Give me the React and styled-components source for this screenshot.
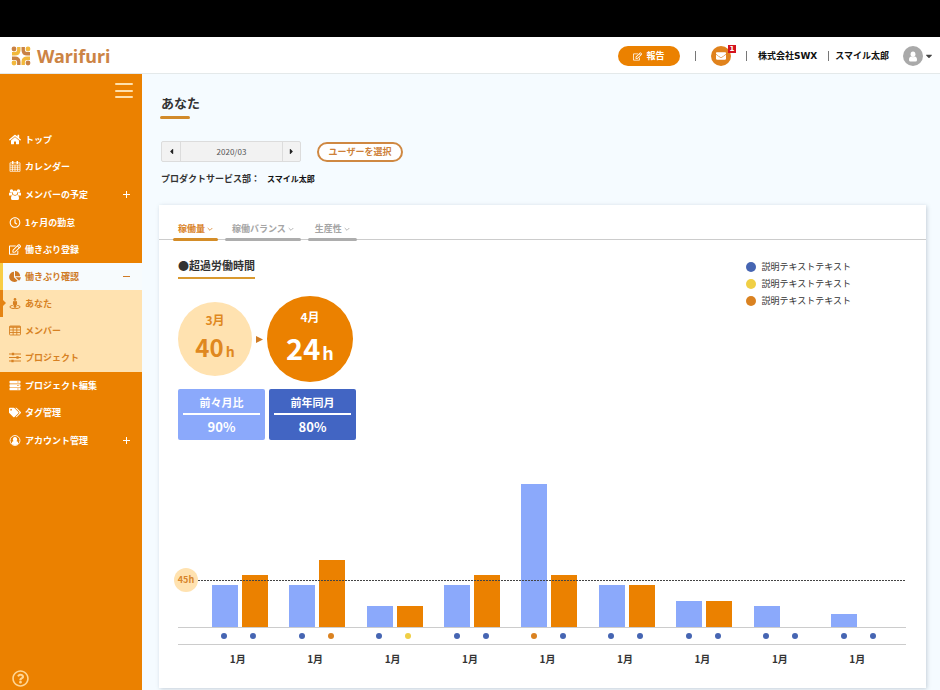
import React from "react";
import styled, { createGlobalStyle } from "styled-components";
import {
  FaCaretDown,
  FaCaretLeft,
  FaCaretRight,
  FaChartPie,
  FaEnvelope,
  FaHome,
  FaRegClock,
  FaRegEdit,
  FaRegQuestionCircle,
  FaServer,
  FaStreetView,
  FaTags,
} from "react-icons/fa";

const GlobalStyle = createGlobalStyle`
  * {
    box-sizing: border-box;
  }

  body {
    margin: 0;
    background: #f5fbff;
    color: #333;
    font-family: "Noto Sans CJK JP", sans-serif;
    font-weight: 700;
    font-size: 9px;
    line-height: 12px;
  }

  h1, h2, p, ul, dl, dd {
    margin: 0;
    padding: 0;
  }

  ul {
    list-style: none;
  }

  a {
    color: inherit;
    text-decoration: none;
  }

  button {
    font: inherit;
    padding: 0;
    cursor: pointer;
  }

  svg {
    display: block;
    flex: none;
  }
`;

const Page = styled.div`
  min-height: 100vh;
  display: flex;
  flex-direction: column;
`;

const TopBand = styled.div`
  height: 37px;
  background: #000;
`;

const Header = styled.header`
  height: 37px;
  padding: 2px 6px 0 11px;
  display: flex;
  align-items: center;
  justify-content: space-between;
  background: #fff;
  border-bottom: 1px solid #e4e9ea;
`;

const Brand = styled.a`
  display: flex;
  align-items: center;
  gap: 6px;
  color: #cc8445;
  font-family: "Noto Sans", sans-serif;
  font-size: 18px;
  line-height: 24px;
`;

const HeaderMenu = styled.div`
  display: flex;
  align-items: center;
  color: #111;
  font-family: "DejaVu Sans", "Noto Sans CJK JP", sans-serif;
`;

const ReportButton = styled.button`
  width: 62px;
  height: 20px;
  display: flex;
  align-items: center;
  justify-content: center;
  gap: 4px;
  color: #fff;
  background: #eb8100;
  border: none;
  border-radius: 10px;
`;

const Separator = styled.span`
  width: 1px;
  height: 10px;
  margin: 0 ${(props) => props.$right}px 0 ${(props) => props.$left}px;
  background: #777;
`;

const MailButton = styled.button`
  position: relative;
  width: 20px;
  height: 20px;
  display: grid;
  place-items: center;
  color: #fff;
  background: #e0821c;
  border: none;
  border-radius: 50%;
`;

const Badge = styled.span`
  position: absolute;
  top: -1px;
  right: -5px;
  width: 8px;
  height: 8px;
  background: #d3121f;
  font-size: 7px;
  line-height: 8px;
`;

const AccountButton = styled.button`
  display: flex;
  align-items: center;
  gap: 1px;
  margin-left: 14px;
  color: #444;
  background: none;
  border: none;
`;

const Avatar = styled.span`
  width: 20px;
  height: 20px;
  display: grid;
  place-items: center;
  color: #fff;
  background: #a9a9a9;
  border-radius: 50%;
`;

const Body = styled.div`
  flex: 1;
  display: flex;
`;

const Sidebar = styled.nav`
  flex: none;
  width: 142px;
  padding-bottom: 3px;
  display: flex;
  flex-direction: column;
  color: #fff;
  background: #eb8100;
`;

const MenuToggle = styled.button`
  align-self: flex-end;
  width: 18px;
  height: 15px;
  margin: 9px 9px 28px 0;
  display: flex;
  flex-direction: column;
  justify-content: space-between;
  background: none;
  border: none;

  span {
    width: 100%;
    height: 2px;
    border-radius: 1px;
    background: #ffe0ab;
  }
`;

const NavLink = styled.a`
  position: relative;
  height: ${(props) => (props.$tall ? 29 : 27)}px;
  padding: 0 10px 0 9px;
  display: flex;
  align-items: center;
  gap: 4px;
  color: ${(props) => (props.$active ? "#cf7a26" : "inherit")};
  background: ${(props) => (props.$active ? "#f7fbfd" : "none")};
  box-shadow: ${(props) => (props.$active ? "inset 3px 0 #f8cd45" : "none")};

  > svg:first-child {
    width: 12px;
    height: 11px;
  }
`;

const NavSign = styled.svg`
  margin-left: auto;
`;

const SubMenu = styled.ul`
  padding-bottom: 1px;
  color: #d78122;
  background: #ffe2b0;
`;

const Marker = styled.span`
  position: absolute;
  left: 0;
  top: 0;
  width: 3px;
  height: 100%;
  background: #e58312;

  &::after {
    content: "";
    position: absolute;
    left: 3px;
    top: 10px;
    border: 3px solid transparent;
    border-left-color: #e58312;
    border-right: none;
  }
`;

const HelpButton = styled.button`
  width: 17px;
  height: 17px;
  margin: auto 0 0 12px;
  color: #ffd694;
  background: none;
  border: none;
`;

const Main = styled.main`
  flex: 1;
  min-width: 0;
  padding: 20px 14px 2px 17px;
`;

const PageTitle = styled.h1`
  padding-left: 2px;
  font-size: 13px;
  line-height: 18px;

  &::after {
    content: "";
    display: block;
    width: 30px;
    height: 3px;
    margin: 4px 0 0 -1px;
    border-radius: 2px;
    background: #d18a2b;
  }
`;

const Toolbar = styled.div`
  margin: 22px 0 11px 2px;
  display: flex;
  align-items: center;
  gap: 16px;
`;

const MonthPicker = styled.div`
  width: 140px;
  height: 21px;
  display: grid;
  grid-template-columns: 19px 1fr 18px;
  color: #555;
  background: #f2f2f2;
  border: 1px solid #dcdcdc;
  border-radius: 2px;
  font-size: 8px;
  font-weight: 400;
  line-height: 19px;
  text-align: center;
`;

const MonthStep = styled.button`
  display: grid;
  place-items: center;
  color: #222;
  background: none;
  border: 0 solid #dcdcdc;
  border-width: ${(props) => (props.$next ? "0 0 0 1px" : "0 1px 0 0")};
`;

const SelectUser = styled.button`
  width: 86px;
  height: 20px;
  color: #cd8038;
  background: #fff;
  border: 2px solid #cf8842;
  border-radius: 10px;
`;

const Department = styled.p`
  padding-left: 2px;

  span {
    margin-left: 5px;
    color: #111;
    font-size: 8px;
  }
`;

const Card = styled.section`
  margin-top: 20px;
  padding-top: 18px;
  background: #fff;
  box-shadow: 1px 1px 4px rgba(90, 110, 130, 0.3);
`;

const Tabs = styled.div`
  padding-left: 14px;
  display: flex;
  gap: 7px;
  border-bottom: 1px solid #ccc;
`;

const Tab = styled.button`
  position: relative;
  margin-bottom: -2px;
  padding: 0 ${(props) => (props.$active ? 5 : 7)}px 6px;
  display: flex;
  align-items: center;
  gap: 2px;
  color: ${(props) => (props.$active ? "#d9832a" : "#a5a5a5")};
  background: none;
  border: none;

  /* rounded bar lying on the rule */
  &::after {
    content: "";
    position: absolute;
    left: 0;
    right: 0;
    bottom: 0;
    height: 3px;
    border-radius: 2px;
    background: ${(props) => (props.$active ? "#d48d28" : "#adadad")};
  }
`;

const CardBody = styled.div`
  padding: 18px 20px 21px 19px;
`;

const Overview = styled.div`
  display: flex;
  justify-content: space-between;
  align-items: flex-start;
`;

const SectionTitle = styled.h2`
  width: max-content;
  padding-bottom: 5px;
  border-bottom: 2px solid #d9992f;
  font-size: 11px;
  line-height: 14px;
`;

const Comparison = styled.div`
  margin: 17px 0 7px;
  display: flex;
  align-items: center;
  gap: 4px;
`;

const MonthCircle = styled.div`
  width: ${(props) => (props.$current ? 86 : 74)}px;
  height: ${(props) => (props.$current ? 86 : 74)}px;
  padding-bottom: 2px;
  display: flex;
  flex-direction: column;
  align-items: center;
  justify-content: center;
  color: ${(props) => (props.$current ? "#fff" : "#df8820")};
  background: ${(props) => (props.$current ? "#eb8100" : "#ffe2b0")};
  border-radius: 50%;
  font-size: 12px;
  line-height: 18px;
`;

const Hours = styled.span`
  display: flex;
  align-items: baseline;
  gap: 2px;
  font-size: ${(props) => (props.$current ? 29 : 24)}px;
  line-height: ${(props) => (props.$current ? 42 : 36)}px;

  small {
    font-size: ${(props) => (props.$current ? 18 : 14)}px;
    line-height: 18px;
  }
`;

const Ratios = styled.dl`
  display: flex;
  gap: 4px;
`;

const Ratio = styled.div`
  width: 87px;
  height: 51px;
  padding: 4px 5px;
  color: #fff;
  background: ${(props) => props.$color};
  border-radius: 2px;
  text-align: center;

  dt {
    padding-bottom: 2px;
    border-bottom: 2px solid #fff;
    font-size: 11px;
    line-height: 18px;
  }

  dd {
    font-size: 13px;
    line-height: 24px;
  }
`;

const Legend = styled.ul`
  margin: 3px 55px 0 0;
  display: grid;
  gap: 5px;
  font-weight: 400;

  li {
    display: flex;
    align-items: center;
    gap: 6px;
  }
`;

const Dot = styled.span`
  width: ${(props) => props.$size}px;
  height: ${(props) => props.$size}px;
  border-radius: 50%;
  background: ${(props) => props.$color};
`;

const Chart = styled.div`
  margin-top: 43px;
`;

const Plot = styled.div`
  position: relative;
  border-bottom: 1px solid #ccc;
`;

const Months = styled.div`
  padding: 0 8px 0 23px;
  display: grid;
  grid-template-columns: repeat(9, 1fr);
`;

const BarPair = styled.div`
  height: 144px;
  display: flex;
  justify-content: center;
  align-items: flex-end;
  gap: 4px;
`;

const Bar = styled.div`
  width: 26px;
  background: ${(props) => props.$color};
`;

const Threshold = styled.div`
  position: absolute;
  left: -4px;
  right: 0;
  bottom: 35px;
  display: flex;
  align-items: center;

  span {
    width: 24px;
    color: #d8862b;
    background: #ffe2b0;
    border-radius: 50%;
    line-height: 24px;
    text-align: center;
  }

  &::after {
    content: "";
    flex: 1;
    height: 1px;
    background: repeating-linear-gradient(90deg, #444 0 2px, transparent 2px 3px);
  }
`;

const DotRow = styled.div`
  padding: 5px 0;
  border-bottom: 1px solid #ccc;
`;

const DotPair = styled.div`
  height: 6px;
  padding-right: 2px;
  display: flex;
  justify-content: center;
  gap: 23px;
`;

const MonthLabel = styled.span`
  padding: 6px 4px 0 0;
  font-size: 10px;
  line-height: 16px;
  text-align: center;
`;

const BLUE = "#4665b2";
const YELLOW = "#f0cf45";
const ORANGE = "#da8221";
const LIGHT_BLUE = "#8ba9fb";

const MONTHS = [
  { bars: [42, 52], dots: [BLUE, BLUE] },
  { bars: [42, 67], dots: [BLUE, ORANGE] },
  { bars: [21, 21], dots: [BLUE, YELLOW] },
  { bars: [42, 52], dots: [BLUE, BLUE] },
  { bars: [143, 52], dots: [ORANGE, BLUE] },
  { bars: [42, 42], dots: [BLUE, BLUE] },
  { bars: [26, 26], dots: [BLUE, BLUE] },
  { bars: [21, 0], dots: [BLUE, BLUE] },
  { bars: [13, 0], dots: [BLUE, BLUE] },
];

const LogoMark = () => (
  <svg width="20" height="20" viewBox="0 0 20 20" fill="none" strokeWidth="3.4">
    <path d="M7.8 1v3q0 3.8-3.8 3.8H1" stroke="#f2b83b" />
    <path d="M12.2 1v3q0 3.8 3.8 3.8h3" stroke="#c98143" />
    <path d="M7.8 19v-3q0-3.8-3.8-3.8H1" stroke="#c98143" />
    <path d="M12.2 19v-3q0-3.8 3.8-3.8h3" stroke="#f2b83b" />
    <circle cx="3" cy="3" r="2.4" fill="#c98143" />
    <circle cx="17" cy="3" r="2.4" fill="#f2b83b" />
    <circle cx="3" cy="17" r="2.4" fill="#f2b83b" />
    <circle cx="17" cy="17" r="2.4" fill="#c98143" />
    <path d="M10 5.5 11.300 8.700 14.500 10 11.300 11.300 10 14.500 8.700 11.300 5.500 10 8.700 8.700z" fill="#fff" />
  </svg>
);

const CalendarIcon = () => (
  <svg viewBox="0 0 24 24" fill="none" stroke="currentColor" strokeWidth="1.6">
    <path d="M1 4h22v18.5H1zM1 9h22M6.5 9v13M12 9v13M17.5 9v13M1 13.5h22M1 18h22" />
    <path d="M7 1.5v4M17 1.5v4" strokeWidth="3.4" strokeLinecap="round" />
  </svg>
);

const GroupIcon = () => (
  <svg viewBox="0 0 24 22" fill="currentColor">
    <circle cx="5" cy="4" r="3.5" />
    <circle cx="19" cy="4" r="3.5" />
    <circle cx="12" cy="7.5" r="4.6" />
    <path d="M0 13V9q0-2 2-2l4 1q0 3 2 5zM24 13V9q0-2-2-2l-4 1q0 3-2 5z" />
    <path d="M4 19q0-7 4-7 4 3 8 0 4 0 4 7 0 3-3 3H7q-3 0-3-3z" />
  </svg>
);

const TableIcon = () => (
  <svg viewBox="0 0 24 22" fill="none" stroke="currentColor" strokeWidth="1.8">
    <rect x="1" y="2" width="22" height="18" rx="1.5" />
    <path d="M1 4h22" strokeWidth="3" />
    <path d="M1 10h22M1 15h22M8.3 4v16M15.6 4v16" />
  </svg>
);

const SlidersIcon = () => (
  <svg viewBox="0 0 24 22" fill="none" stroke="currentColor" strokeWidth="2">
    <path d="M0 4h24M0 11h24M0 18h24" />
    <path d="M8 1.5v5M17 8.5v5M7 15.5v5" strokeWidth="4.5" />
  </svg>
);

const AccountIcon = () => (
  <svg viewBox="0 0 24 24">
    <circle cx="12" cy="12" r="10.8" fill="none" stroke="currentColor" strokeWidth="2" />
    <path d="M12 4.5a4.6 5 0 0 1 3 8.8q4 .7 4.4 5.2a10 10 0 0 1-14.8 0q.4-4.5 4.4-5.2a4.6 5 0 0 1 3-8.8z" fill="currentColor" />
  </svg>
);

const PersonIcon = () => (
  <svg width="10" height="11" viewBox="0 0 20 22" fill="currentColor">
    <ellipse cx="10" cy="6.5" rx="4.8" ry="5.5" />
    <path d="M2 18q0-7 4.5-7 3.5 3 7 0Q18 11 18 18q0 3-3 3H5q-3 0-3-3z" />
  </svg>
);

const Chevron = () => (
  <svg width="6" height="6" viewBox="0 0 6 6" fill="none" stroke="currentColor">
    <path d="M.7 2 3 4.3 5.3 2" strokeWidth=".8" />
  </svg>
);

const Sign = ({ open }) => (
  <NavSign width="11" height="11" viewBox="0 0 11 11" stroke="currentColor" strokeWidth="1">
    <path d={open ? "M2 5.5h7" : "M2 5.5h7M5.5 2v7"} />
  </NavSign>
);

const NavItem = ({ icon: Icon, label, sign, active, open, current, children }) => (
  <li>
    <NavLink href="#" $active={active} $tall={sign && !open}>
      <Icon />
      {current && <Marker />}
      {label}
      {sign && <Sign open={open} />}
    </NavLink>
    {children}
  </li>
);

const App = () => {
  return (
    <Page>
      <GlobalStyle />
      <TopBand />
      <Header>
        <Brand href="#">
          <LogoMark />
          Warifuri
        </Brand>
        <HeaderMenu>
          <ReportButton>
            <FaRegEdit size={9} />
            報告
          </ReportButton>
          <Separator $left={15} $right={15} />
          <MailButton aria-label="メール">
            <FaEnvelope size={10} />
            <Badge>1</Badge>
          </MailButton>
          <Separator $left={15} $right={11} />
          <span>株式会社SWX</span>
          <Separator $left={11} $right={6} />
          <span>スマイル太郎</span>
          <AccountButton aria-label="アカウント">
            <Avatar>
              <PersonIcon />
            </Avatar>
            <FaCaretDown size={10} />
          </AccountButton>
        </HeaderMenu>
      </Header>
      <Body>
        <Sidebar>
          <MenuToggle aria-label="メニュー">
            <span />
            <span />
            <span />
          </MenuToggle>
          <ul>
            <NavItem icon={FaHome} label="トップ" />
            <NavItem icon={CalendarIcon} label="カレンダー" />
            <NavItem icon={GroupIcon} label="メンバーの予定" sign />
            <NavItem icon={FaRegClock} label="1ヶ月の勤怠" />
            <NavItem icon={FaRegEdit} label="働きぶり登録" />
            <NavItem icon={FaChartPie} label="働きぶり確認" sign open active>
              <SubMenu>
                <NavItem icon={FaStreetView} label="あなた" current />
                <NavItem icon={TableIcon} label="メンバー" />
                <NavItem icon={SlidersIcon} label="プロジェクト" />
              </SubMenu>
            </NavItem>
            <NavItem icon={FaServer} label="プロジェクト編集" />
            <NavItem icon={FaTags} label="タグ管理" />
            <NavItem icon={AccountIcon} label="アカウント管理" sign />
          </ul>
          <HelpButton aria-label="ヘルプ">
            <FaRegQuestionCircle size={17} />
          </HelpButton>
        </Sidebar>
        <Main>
          <PageTitle>あなた</PageTitle>
          <Toolbar>
            <MonthPicker>
              <MonthStep aria-label="前の月">
                <FaCaretLeft size={9} />
              </MonthStep>
              <span>2020/03</span>
              <MonthStep $next aria-label="次の月">
                <FaCaretRight size={9} />
              </MonthStep>
            </MonthPicker>
            <SelectUser>ユーザーを選択</SelectUser>
          </Toolbar>
          <Department>
            プロダクトサービス部： <span>スマイル太郎</span>
          </Department>
          <Card>
            <Tabs>
              <Tab $active>
                稼働量
                <Chevron />
              </Tab>
              <Tab>
                稼働バランス
                <Chevron />
              </Tab>
              <Tab>
                生産性
                <Chevron />
              </Tab>
            </Tabs>
            <CardBody>
              <Overview>
                <div>
                  <SectionTitle>●超過労働時間</SectionTitle>
                  <Comparison>
                    <MonthCircle>
                      3月
                      <Hours>
                        40<small>h</small>
                      </Hours>
                    </MonthCircle>
                    <svg width="7" height="7" viewBox="0 0 6 6" fill="#d07c25">
                      <path d="M0 0 6 3 0 6z" />
                    </svg>
                    <MonthCircle $current>
                      4月
                      <Hours $current>
                        24<small>h</small>
                      </Hours>
                    </MonthCircle>
                  </Comparison>
                  <Ratios>
                    <Ratio $color={LIGHT_BLUE}>
                      <dt>前々月比</dt>
                      <dd>90%</dd>
                    </Ratio>
                    <Ratio $color="#4265c3">
                      <dt>前年同月</dt>
                      <dd>80%</dd>
                    </Ratio>
                  </Ratios>
                </div>
                <Legend>
                  {[BLUE, YELLOW, ORANGE].map((color) => (
                    <li key={color}>
                      <Dot $size={10} $color={color} />
                      説明テキストテキスト
                    </li>
                  ))}
                </Legend>
              </Overview>
              <Chart>
                <Plot>
                  <Months>
                    {MONTHS.map(({ bars }, i) => (
                      <BarPair key={i}>
                        <Bar $color={LIGHT_BLUE} style={{ height: bars[0] }} />
                        <Bar $color="#eb8100" style={{ height: bars[1] }} />
                      </BarPair>
                    ))}
                  </Months>
                  <Threshold>
                    <span>45h</span>
                  </Threshold>
                </Plot>
                <DotRow>
                  <Months>
                    {MONTHS.map(({ dots }, i) => (
                      <DotPair key={i}>
                        <Dot $size={6} $color={dots[0]} />
                        <Dot $size={6} $color={dots[1]} />
                      </DotPair>
                    ))}
                  </Months>
                </DotRow>
                <Months>
                  {MONTHS.map((month, i) => (
                    <MonthLabel key={i}>1月</MonthLabel>
                  ))}
                </Months>
              </Chart>
            </CardBody>
          </Card>
        </Main>
      </Body>
    </Page>
  );
};

export default App;
